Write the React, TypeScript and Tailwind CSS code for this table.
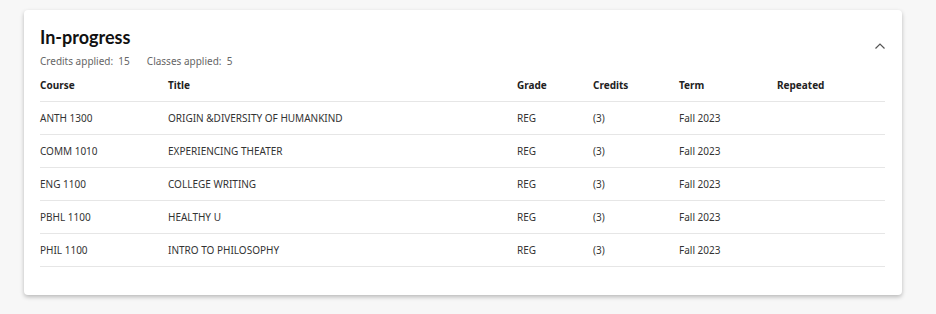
import React from 'react';

const rows = [
  { course: 'ANTH 1300', title: 'ORIGIN &DIVERSITY OF HUMANKIND' },
  { course: 'COMM 1010', title: 'EXPERIENCING THEATER' },
  { course: 'ENG 1100', title: 'COLLEGE WRITING' },
  { course: 'PBHL 1100', title: 'HEALTHY U' },
  { course: 'PHIL 1100', title: 'INTRO TO PHILOSOPHY' },
];

const cols = 'grid grid-cols-[128px_349px_76px_86px_98px_1fr]';

export default function App() {
  return (
    <div className="w-[936px] h-[314px] bg-[#f7f7f7] pt-[10px] pl-[24px] font-['Noto_Sans',sans-serif] text-[#222]">
      <div className="w-[878px] h-[285px] bg-white rounded-[4px] shadow-[0_2px_4px_rgba(0,0,0,0.25)] pl-4 pr-[17px] pt-[15px]">
        <div className="flex items-start justify-between">
          <div>
            <h2 className="font-['Lato',sans-serif] text-[18px] leading-[24px] font-bold text-[#111]">In-progress</h2>
            <div className="flex gap-[17px] text-[10px] leading-[16px] text-[#666] mt-[4px]">
              <span>Credits applied:&nbsp; 15</span>
              <span>Classes applied:&nbsp; 5</span>
            </div>
          </div>
          <svg width="12" height="8" viewBox="0 0 12 8" className="mt-[17px] mr-[-1px]" fill="none" stroke="#555" strokeWidth="1.2">
            <path d="M1.5 6.5 L6 2 L10.5 6.5" />
          </svg>
        </div>
        <div className={`${cols} text-[10px] font-bold text-[#222] h-[33px] items-center border-b border-[#e6e6e6]`}>
          <span>Course</span>
          <span>Title</span>
          <span>Grade</span>
          <span>Credits</span>
          <span>Term</span>
          <span>Repeated</span>
        </div>
        {rows.map(r => (
          <div key={r.course} className={`${cols} text-[10px] text-[#333] h-[33px] items-center border-b border-[#e6e6e6]`}>
            <span>{r.course}</span>
            <span>{r.title}</span>
            <span>REG</span>
            <span>(3)</span>
            <span>Fall 2023</span>
            <span></span>
          </div>
        ))}
      </div>
    </div>
  );
}
